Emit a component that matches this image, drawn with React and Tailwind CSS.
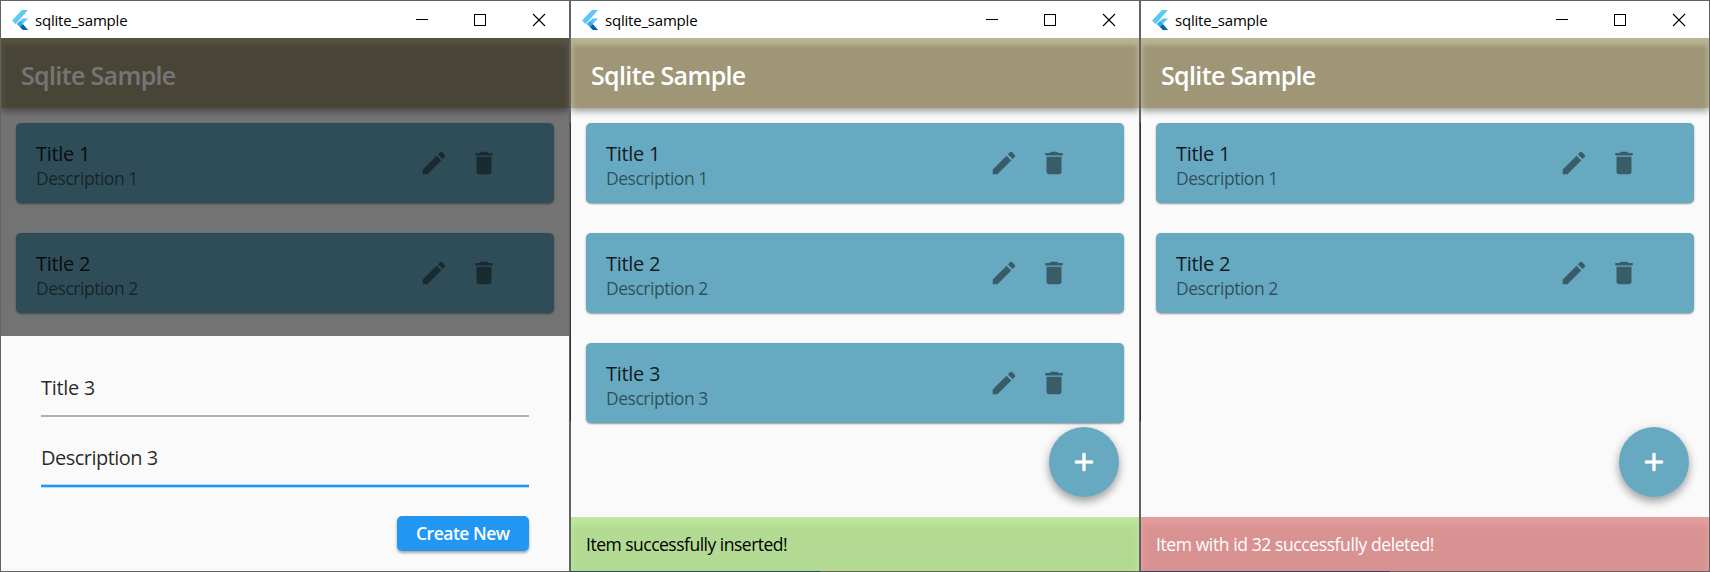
import React from "react";

const INK = "font-['Open_Sans','Noto_Sans',sans-serif]";

function FlutterMark() {
  return (
    <svg className="h-5 w-4 shrink-0" viewBox="0 0 16 20">
      <path d="M10 0H16L3.6 14.2L0 10.6Z" fill="#5cc8f8" />
      <path d="M10.6 8.4H16L10.6 14L16 20H11L5 14Z" fill="#54c5f8" />
      <path d="M5 14L8 11L11 14L8 17Z" fill="#35a9ea" />
      <path d="M8 17L11 14.2L16 20H11Z" fill="#0b5fa5" />
    </svg>
  );
}

function TitleBar() {
  return (
    <div className="flex h-[37px] shrink-0 items-center bg-white pl-[11px] text-black">
      <FlutterMark />
      <span className="ml-[7px] flex-1 text-[15px] leading-5 tracking-[-0.2px]">sqlite_sample</span>
      <svg className="h-9 w-[168px] shrink-0" viewBox="0 0 168 36" fill="none" stroke="#000" shapeRendering="crispEdges">
        <path d="M15 17.5H27" />
        <rect x="73.5" y="12.5" width="11" height="11" />
        <path d="M132 12L144 24M144 12L132 24" shapeRendering="auto" strokeWidth="1.1" />
      </svg>
    </div>
  );
}

function AppBar() {
  return (
    <div className="z-10 flex h-[70px] shrink-0 items-center bg-[#9f9677] pl-5 pt-[3px] shadow-[inset_0_8px_5px_-1px_#bbb391,inset_5px_0_5px_-3px_#b5ad8b,inset_-5px_0_5px_-3px_#b5ad8b,0_3px_7px_rgba(0,0,0,0.4)]">
      <h1 className="text-[25px] font-semibold leading-8 tracking-[-0.65px] text-white">Sqlite Sample</h1>
    </div>
  );
}

function Card({ n }) {
  return (
    <div className="flex h-20 shrink-0 items-center rounded-[5px] bg-[#67a9c0] pl-5 pr-[55px] shadow-[0_1px_2px_rgba(0,0,0,0.4)]">
      <div className="flex-1 pt-[6px]">
        <div className="text-[20px] leading-[25px] tracking-[-0.3px] text-black/85">Title {n}</div>
        <div className="text-[17.5px] leading-[25px] tracking-[-0.48px] text-black/55">Description {n}</div>
      </div>
      <div className="flex gap-5 text-black/45">
        <svg className="h-[30px] w-[30px]" viewBox="0 0 24 24" fill="currentColor">
          <path d="M3 17.25V21h3.75L17.81 9.94l-3.75-3.75L3 17.25zM20.71 7.04a.996.996 0 0 0 0-1.41l-2.34-2.34a.996.996 0 0 0-1.41 0l-1.83 1.83 3.75 3.75 1.83-1.83z" />
        </svg>
        <svg className="h-[30px] w-[30px]" viewBox="0 0 24 24" fill="currentColor">
          <path d="M6 19c0 1.1.9 2 2 2h8c1.1 0 2-.9 2-2V7H6v12zM19 4h-3.5l-1-1h-5l-1 1H5v2h14V4z" />
        </svg>
      </div>
    </div>
  );
}

function Fab() {
  return (
    <button className="absolute right-[20px] top-[389px] flex h-[70px] w-[70px] items-center justify-center rounded-full bg-[#67a9c0] text-white shadow-[0_5px_8px_rgba(0,0,0,0.3),0_1px_12px_rgba(0,0,0,0.1)]">
      <svg className="h-[30px] w-[30px]" viewBox="0 0 24 24" fill="currentColor" stroke="currentColor" strokeWidth="0.6">
        <path d="M19 13h-6v6h-2v-6H5v-2h6V5h2v6h6v2z" />
      </svg>
    </button>
  );
}

function Sheet() {
  return (
    <div className="absolute inset-0 z-20 flex flex-col bg-black/[0.54]">
      <div className="h-[298px] shrink-0" />
      <div className="flex flex-1 flex-col bg-[#fafafa] px-10 text-[20px] text-black/85">
        <div className="flex h-[81px] items-end border-b-2 border-[#b0b0b0] pb-[14px] leading-[27px] tracking-[-0.3px]">Title 3</div>
        <div className="flex h-[70px] items-end border-b-2 border-[#2196f3] pb-[14px] leading-[27px] tracking-[-0.52px] shadow-[0_1px_0_#b5dbfa,inset_0_-1px_0_#b5dbfa]">Description 3</div>
        <button className="mt-[29px] h-[35px] w-[132.5px] shrink-0 self-end rounded-[5px] bg-[#2196f3] text-[17.5px] font-semibold leading-[35px] tracking-[-0.5px] text-white shadow-[0_2px_3px_rgba(0,0,0,0.35)]">
          Create New
        </button>
      </div>
    </div>
  );
}

const tones = {
  green:
    "bg-[#b3da92] text-black tracking-[-0.5px] shadow-[inset_0_10px_6px_-2px_#bee69e,inset_5px_0_5px_-3px_#bce49c,inset_-5px_0_5px_-3px_#bce49c]",
  red:
    "bg-[#d99292] text-white tracking-[-0.4px] shadow-[inset_0_10px_6px_-2px_#e39e9e,inset_5px_0_5px_-3px_#e29c9c,inset_-5px_0_5px_-3px_#e29c9c]",
};

function Snack({ tone, children }) {
  return (
    <div className={`flex h-[54px] shrink-0 items-center pl-[15px] pt-px text-[17.5px] ${tones[tone]}`}>
      {children}
    </div>
  );
}

function Window({ items, sheet, snack, tone }) {
  return (
    <section className="relative flex h-[572px] w-[570px] shrink-0 flex-col border border-[#626262] bg-[#fafafa]">
      <TitleBar />
      <div className="relative flex flex-1 flex-col overflow-hidden">
        <AppBar />
        <div className="flex flex-1 flex-col gap-[30px] px-[15px] pt-[15px]">
          {items.map((n) => (
            <Card key={n} n={n} />
          ))}
        </div>
        {snack && <Fab />}
        {snack && <Snack tone={tone}>{snack}</Snack>}
        {sheet && <Sheet />}
      </div>
      {/* desktop showing through the window edge */}
      {snack && <div className="absolute -left-px top-[122px] h-[298px] w-px bg-[#2b3438]" />}
      {snack && <div className="absolute -bottom-px -left-px h-px w-[250px] bg-[#27476f]" />}
    </section>
  );
}

export default function App() {
  return (
    <main className={`flex h-[572px] w-[1710px] overflow-hidden ${INK}`}>
      <Window items={[1, 2]} sheet />
      <Window items={[1, 2, 3]} tone="green" snack="Item successfully inserted!" />
      <Window items={[1, 2]} tone="red" snack="Item with id 32 successfully deleted!" />
    </main>
  );
}
